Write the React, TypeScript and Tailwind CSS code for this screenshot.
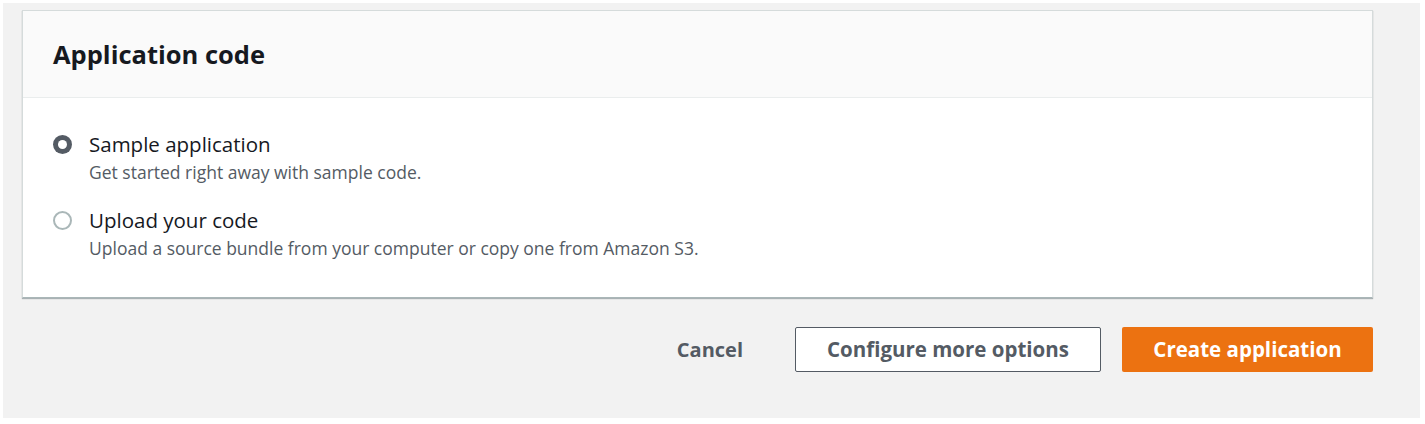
import React from 'react';

const font = { fontFamily: '"Open Sans", "Noto Sans", Arial, sans-serif' };

function Radio({ checked }: { checked?: boolean }) {
  return checked ? (
    <span className="mt-[3px] flex h-[19px] w-[19px] shrink-0 items-center justify-center rounded-full bg-[#545b64]">
      <span className="h-[9px] w-[9px] rounded-full bg-white" />
    </span>
  ) : (
    <span className="mt-[3px] h-[19px] w-[19px] shrink-0 rounded-full border-2 border-[#aab7b8] bg-white" />
  );
}

const options = [
  { label: 'Sample application', desc: 'Get started right away with sample code.', checked: true },
  { label: 'Upload your code', desc: 'Upload a source bundle from your computer or copy one from Amazon S3.' },
];

export default function App() {
  return (
    <div className="h-[424px] w-[1425px] bg-white pl-[3px] pt-[3px]" style={font}>
      <div className="h-[415px] w-[1417px] bg-[#f2f2f2] pl-[19px] pt-[7px]">
        {/* ── Card ─────────────────────────────────── */}
        <div className="w-[1351px] border border-[#d5dbdb] border-b-[#aab7b8] bg-white shadow-[0_1px_1px_rgba(0,28,36,0.3)]">
          <div className="flex h-[87px] items-center border-b border-[#eaeded] bg-[#fafafa] px-[30px]">
            <h2 className="text-[25.5px] font-bold text-[#16191f]">Application code</h2>
          </div>
          <div className="flex h-[199px] flex-col gap-[25px] px-[30px] pt-[34px]">
            {options.map((o) => (
              <label key={o.label} className="flex items-start gap-[17px]">
                <Radio checked={o.checked} />
                <div className="flex flex-col">
                  <span className="text-[20.5px] leading-[24px] text-[#16191f]">{o.label}</span>
                  <span className="mt-[5px] text-[17.5px] leading-[22px] text-[#545b64]">{o.desc}</span>
                </div>
              </label>
            ))}
          </div>
        </div>

        {/* ── Actions ──────────────────────────────── */}
        <div className="mt-[29px] flex w-[1351px] items-center justify-end">
          <button className="mr-[52px] text-[20px] font-bold text-[#545b64]">Cancel</button>
          <button className="mr-[21px] h-[45px] w-[306px] rounded-[2px] border border-[#545b64] bg-white text-[20.5px] font-bold text-[#545b64]">
            Configure more options
          </button>
          <button className="h-[45px] w-[251px] rounded-[2px] bg-[#ec7211] text-[20.5px] font-bold text-white">
            Create application
          </button>
        </div>
      </div>
    </div>
  );
}
